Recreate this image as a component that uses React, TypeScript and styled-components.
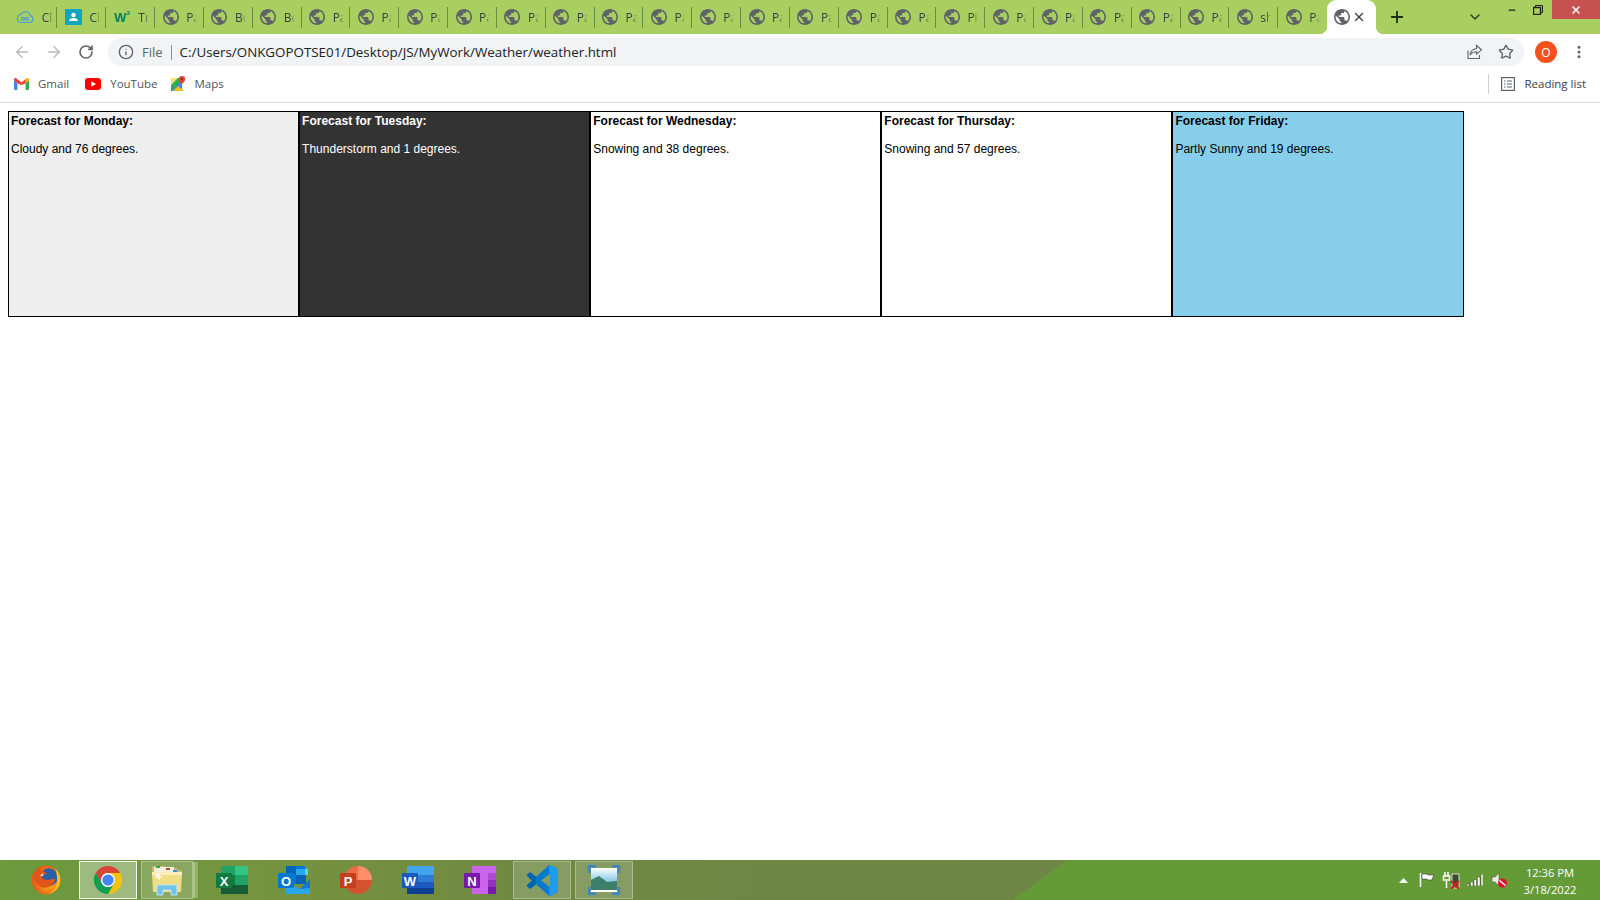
import React from "react";
import styled, { createGlobalStyle } from "styled-components";
import { ArrowLeft, ArrowRight, RotateCw, Info, Star, Plus, ChevronDown, X, Minus, EllipsisVertical } from "lucide-react";

const GlobalStyle = createGlobalStyle`
  html, body { margin: 0; padding: 0; height: 100%; overflow: hidden; background: #fff; }
  #root { height: 100%; }
`;

const uiFont = `"Open Sans", "Noto Sans", sans-serif`;

const Screen = styled.div`
  display: flex;
  flex-direction: column;
  width: 1600px;
  height: 900px;
  font-family: ${uiFont};
`;

const TabStrip = styled.div`
  display: flex;
  align-items: stretch;
  height: 34px;
  padding-left: 8.67px;
  background: #a8cf60;
  flex-shrink: 0;
`;

const Tab = styled.div`
  display: flex;
  align-items: center;
  box-sizing: border-box;
  width: 48.83px;
  padding-left: 7.5px;
  gap: 7.5px;
  border-right: 1px solid #6d8c3f;
  border-image: linear-gradient(to bottom, transparent 8px, #6d8c3f 8px, #6d8c3f 27px, transparent 27px) 1;
  color: #3c4043;
  font-size: 12px;
  &:nth-child(27) { border-right: none; }
  svg { flex-shrink: 0; }
`;

const TabTitle = styled.span`
  white-space: nowrap;
  -webkit-mask-image: linear-gradient(to right, #000 6px, transparent 11px);
  mask-image: linear-gradient(to right, #000 6px, transparent 11px);
`;

const ActiveTab = styled.div`
  display: flex;
  align-items: center;
  width: 49px;
  padding-left: 7px;
  gap: 2px;
  box-sizing: border-box;
  background: #fff;
  border-radius: 9px 9px 0 0;
  position: relative;
  &::before, &::after {
    content: "";
    position: absolute;
    bottom: 0;
    width: 8px;
    height: 8px;
  }
  &::before { left: -8px; background: radial-gradient(circle at 0 0, transparent 8px, #fff 8.5px); }
  &::after { right: -8px; background: radial-gradient(circle at 100% 0, transparent 8px, #fff 8.5px); }
`;

const NewTab = styled.div`
  display: flex;
  align-items: center;
  margin-left: 12px;
  color: #1f2a10;
`;

const StripSpacer = styled.div`
  flex: 1;
`;

const TabSearch = styled.div`
  display: flex;
  align-items: center;
  margin-right: 17px;
  color: #37421f;
`;

const WinButton = styled.div<{ $w: number; $danger?: boolean }>`
  display: flex;
  align-items: center;
  justify-content: center;
  width: ${(p) => p.$w}px;
  height: 19px;
  color: ${(p) => (p.$danger ? "#fff" : "#222")};
  background: ${(p) => (p.$danger ? "#c75050" : "transparent")};
`;

const Toolbar = styled.div`
  display: flex;
  align-items: center;
  box-sizing: border-box;
  height: 34px;
  background: #fff;
  padding: 2px 0 0 13px;
  flex-shrink: 0;
`;

const NavButton = styled.div<{ $off?: boolean; $w: number }>`
  display: flex;
  align-items: center;
  width: ${(p) => p.$w}px;
  color: ${(p) => (p.$off ? "#b9bbbd" : "#5f6368")};
`;

const Omnibox = styled.div`
  display: flex;
  align-items: center;
  width: 1416px;
  height: 28px;
  margin-left: 1px;
  padding-left: 10px;
  box-sizing: border-box;
  background: #f1f3f4;
  border-radius: 14px;
`;

const Scheme = styled.span`
  margin-left: 8px;
  padding-right: 8px;
  border-right: 1px solid #8d8f92;
  font-size: 13px;
  line-height: 15px;
  color: #5f6368;
`;

const Url = styled.span`
  margin-left: 8px;
  font-size: 13.36px;
  color: #202124;
  white-space: nowrap;
`;

const OmniActions = styled.div`
  display: flex;
  align-items: center;
  gap: 15px;
  margin-left: auto;
  margin-right: 10px;
  color: #5f6368;
`;

const Avatar = styled.div`
  display: flex;
  align-items: center;
  justify-content: center;
  width: 22px;
  height: 22px;
  margin-left: 11px;
  border-radius: 50%;
  background: #f4511e;
  color: #fff;
  font-size: 12px;
`;

const MenuDots = styled.div`
  display: flex;
  margin-left: 14px;
  color: #5f6368;
`;

const BookmarkBar = styled.div`
  display: flex;
  align-items: center;
  box-sizing: border-box;
  height: 35px;
  padding: 0 0 3px 14px;
  background: #fff;
  border-bottom: 1px solid #d4d5d6;
  flex-shrink: 0;
`;

const Bookmark = styled.div<{ $next: number }>`
  display: flex;
  align-items: center;
  gap: 9px;
  margin-right: ${(p) => p.$next}px;
  font-size: 11.5px;
  color: #50545a;
`;

const ReadingList = styled.div`
  display: flex;
  align-items: center;
  gap: 9px;
  height: 20px;
  margin-left: auto;
  margin-right: 14px;
  padding-left: 12px;
  border-left: 1px solid #cfd1d3;
  font-size: 11.5px;
  color: #3c4043;
`;

const Page = styled.main`
  flex: 1;
  padding: 8px;
  background: #fff;
`;

const Row = styled.div`
  display: flex;
`;

const Forecast = styled.div<{ $bg: string; $fg: string }>`
  box-sizing: border-box;
  width: 291.12px;
  height: 206px;
  padding: 2px;
  border: 1px solid #000;
  background: ${(p) => p.$bg};
  color: ${(p) => p.$fg};
  font: 12px/14px "Liberation Sans", Arial, sans-serif;
  &:last-child { width: 292px; }
`;

const ForecastTitle = styled.div`
  font-weight: 700;
  margin-bottom: 14px;
`;

const Taskbar = styled.footer`
  display: flex;
  align-items: center;
  gap: 4px;
  height: 40px;
  padding-left: 17px;
  flex-shrink: 0;
  color: #fff;
  background:
    linear-gradient(144deg, transparent 627px, #659b37 628px),
    linear-gradient(90deg, #6c9a3d 0px, #719640 180px, #76923f 300px, #6f8843 520px, #6e8645 1100px);
`;

const TaskButton = styled.div<{ $state?: "active" | "open"; $stacked?: boolean }>`
  display: flex;
  align-items: center;
  justify-content: center;
  box-sizing: border-box;
  width: ${(p) => (p.$stacked ? 52 : 58)}px;
  height: 38px;
  margin-right: ${(p) => (p.$stacked ? 6 : 0)}px;
  flex-shrink: 0;
  border: 1px solid
    ${(p) =>
      p.$state === "active" ? "rgba(255,255,255,0.9)" : p.$state === "open" ? "rgba(255,255,255,0.3)" : "transparent"};
  background: ${(p) =>
    p.$state === "active" ? "rgba(255,255,255,0.33)" : p.$state === "open" ? "rgba(255,255,255,0.17)" : "transparent"};
  box-shadow: ${(p) =>
    p.$stacked
      ? "3px 0 0 -1px rgba(200,215,160,0.5), 6px 0 0 -1px rgba(200,215,160,0.4)"
      : "none"};
`;

const Tray = styled.div`
  display: flex;
  align-items: center;
  margin-left: auto;
  height: 100%;
`;

const TrayIcon = styled.div<{ $w: number }>`
  display: flex;
  align-items: center;
  justify-content: center;
  width: ${(p) => p.$w}px;
`;

const Clock = styled.div`
  width: 74px;
  margin-left: 2px;
  margin-right: 13px;
  padding-top: 2px;
  text-align: center;
  font-size: 11.2px;
  line-height: 17px;
  color: #fff;
`;

const Globe = () => (
  <svg width="16" height="16" viewBox="2 2 20 20" fill="#5f6368">
    <path d="M12 2C6.48 2 2 6.48 2 12s4.48 10 10 10 10-4.48 10-10S17.52 2 12 2zm-1 17.93c-3.95-.49-7-3.85-7-7.93 0-.62.08-1.21.21-1.79L9 15v1c0 1.1.9 2 2 2v1.93zm6.9-2.54c-.26-.81-1-1.39-1.9-1.39h-1v-3c0-.55-.45-1-1-1H8v-2h2c.55 0 1-.45 1-1V7h2c1.1 0 2-.9 2-2v-.41c2.93 1.19 5 4.06 5 7.41 0 2.08-.8 3.97-2.1 5.39z" />
  </svg>
);

const CloudIcon = () => (
  <svg width="18" height="16" viewBox="0 0 18 16" fill="none" stroke="#4a9fc9" strokeWidth="1.2">
    <path d="M4.500 13.500h9a3.400 3.400 0 0 0 .8-6.700A5 5 0 0 0 5 5.300a4.200 4.200 0 0 0-.5 8.200z" />
    <circle cx="7" cy="9.800" r="1.500" />
    <circle cx="11" cy="9.800" r="1.500" />
  </svg>
);

const ContactIcon = () => (
  <svg width="17" height="16" viewBox="0 0 17 16">
    <rect width="17" height="16" rx="1" fill="#12a5bd" />
    <circle cx="8.500" cy="6" r="2.200" fill="#fff" />
    <path d="M4 12c.5-2.400 2.400-3 4.500-3s4 .6 4.500 3z" fill="#fff" />
  </svg>
);

const W3Icon = () => (
  <svg width="17" height="16" viewBox="0 0 17 16">
    <text x="0" y="13" fontFamily="Liberation Sans" fontWeight="700" fontSize="13" fill="#04845b">W</text>
    <text x="12.500" y="6" fontFamily="Liberation Sans" fontWeight="700" fontSize="6" fill="#04845b">3</text>
  </svg>
);

const ShareIcon = () => (
  <svg width="16" height="16" viewBox="0 0 16 16" fill="none" stroke="#5f6368" strokeWidth="1.1">
    <path d="M1 6.500V14.500H12.500V11" />
    <path d="M9.500 1.500l5 4.300-5 4.200V7.700c-3 0-5 1-6.500 3.300.4-3.500 2.600-6 6.500-6.500z" />
  </svg>
);

const GmailIcon = () => (
  <svg width="15" height="12" viewBox="0 0 15 12">
    <path d="M0 2v8.700C0 11.400.6 12 1.300 12H3.400V5.200z" fill="#4285f4" />
    <path d="M15 2v8.700c0 .7-.6 1.300-1.300 1.300h-2.100V5.200z" fill="#34a853" />
    <path d="M3.400 5.200L0 2.500V1.500C0 .2 1.500-.4 2.400.4L7.500 4.200 7.500 7.200z" fill="#ea4335" />
    <path d="M11.600 5.200L15 2.500V1.500c0-1.300-1.500-1.900-2.400-1.100L7.500 4.200v3z" fill="#ea4335" />
    <path d="M15 2.500L11.600 5.200V1.200l1-.8c.9-.8 2.400-.2 2.400 1.100z" fill="#fbbc04" />
  </svg>
);

const YoutubeIcon = () => (
  <svg width="16" height="12" viewBox="0 0 16 12">
    <rect width="16" height="12" rx="3" fill="#f00" />
    <path d="M6.300 3.300v5.400L11 6z" fill="#fff" />
  </svg>
);

const MapsIcon = () => (
  <svg width="15" height="15" viewBox="0 0 15 15">
    <path d="M0 2h11v13H0z" fill="#34a853" />
    <path d="M0 15L11 5v10z" fill="#4285f4" />
    <path d="M2 15l5-5 6 5z" fill="#fbbc04" />
    <path d="M0 2h7L0 9z" fill="#fbe36c" />
    <path d="M11 0a3.200 3.200 0 0 1 3.200 3.200C14.200 5.500 11 8 11 8S7.800 5.500 7.800 3.200A3.200 3.200 0 0 1 11 0z" fill="#ea4335" />
    <circle cx="11" cy="3.200" r="1.100" fill="#a52714" />
  </svg>
);

const ListIcon = () => (
  <svg width="14" height="14" viewBox="0 0 14 14" fill="none" stroke="#5f6368" strokeWidth="1.200">
    <rect x="0.600" y="0.600" width="12.800" height="12.800" />
    <path d="M3 4h1.500M6 4h5M3 7h1.500M6 7h5M3 10h1.500M6 10h5" />
  </svg>
);

const RestoreIcon = () => (
  <svg width="10" height="10" viewBox="0 0 10 10" fill="none" stroke="#222" strokeWidth="1">
    <rect x="0.500" y="2.500" width="7" height="7" strokeWidth="1.400" />
    <path d="M2.500 2.500V.5h7v7h-2" />
  </svg>
);

const FirefoxIcon = () => (
  <svg width="30" height="30" viewBox="0 0 32 32">
    <defs>
      <radialGradient id="foxBody" cx="0.6" cy="0.55" r="0.65">
        <stop offset="0.3" stopColor="#f9a01b" />
        <stop offset="1" stopColor="#dd4a17" />
      </radialGradient>
    </defs>
    <circle cx="16" cy="16" r="15.500" fill="url(#foxBody)" />
    <circle cx="19" cy="13" r="9.500" fill="#2a5ea8" />
    <path d="M8 4c3 2 6 2 9 5-2 1-5 1-5 3.500s3 3.500 6 3.500 6-2 8-1c-1 6-7 10-13 9-6-1-10-6-10-11 0-4 2-7 5-9.500z" fill="#e0551a" />
    <path d="M13 9c-1.500.5-3 1-3 3l3-.5z" fill="#ffe9c4" />
    <path d="M26 4c4 4 6 9 5 14-1 6-6 11-12 13 5-3 9-8 9-14 0-5-1-9-2-13z" fill="#ffc21e" />
  </svg>
);

const ChromeIcon = () => (
  <svg width="30" height="30" viewBox="0 0 32 32">
    <path d="M3 8.500A15 15 0 0 1 29 8.500H16A7.500 7.500 0 0 0 9.500 19.750z" fill="#db4437" />
    <path d="M29 8.500A15 15 0 0 1 16 31l6.500-11.250A7.500 7.500 0 0 0 16 8.500z" fill="#f4c20d" />
    <path d="M3 8.500A15 15 0 0 0 16 31l6.500-11.250A7.500 7.500 0 0 1 9.500 19.750z" fill="#0f9d58" />
    <circle cx="16" cy="16" r="7.500" fill="#fff" />
    <circle cx="16" cy="16" r="6" fill="#4285f4" />
  </svg>
);

const FolderIcon = () => (
  <svg width="32" height="32" viewBox="0 0 32 32">
    <path d="M1 2h13l2 2h10l1 2h4v8H1z" fill="#c9b56c" />
    <path d="M3 3h20v6H3z" fill="#f4f0dc" />
    <rect x="5" y="2" width="4" height="2" fill="#2fa84a" />
    <rect x="15" y="4" width="4" height="2" fill="#c8402c" />
    <rect x="22" y="6" width="4" height="2" fill="#2f8fd8" />
    <path d="M1 8h30l-1 20H2z" fill="#f2dc84" />
    <path d="M1 8h30v3H1z" fill="#fbeeb8" />
    <path d="M5 10l3-1 1 3 3 1-3 1-1 3-1-3-3-1z" fill="#fff" opacity="0.8" />
    <path d="M6 31V21h20v10h-6v-5h-8v5z" fill="#6fc3ea" stroke="#bfe6f7" strokeWidth="1" />
  </svg>
);

const LetterTile = ({ letter, fill }: { letter: string; fill: string }) => (
  <>
    <rect x="0" y="7" width="16" height="15" rx="1" fill={fill} />
    <text x="8" y="19.500" textAnchor="middle" fontFamily="Liberation Sans" fontWeight="700" fontSize="13" fill="#fff">{letter}</text>
  </>
);

const ExcelIcon = () => (
  <svg width="32" height="28" viewBox="0 0 32 28">
    <rect x="5" y="0" width="14" height="9" fill="#21a366" />
    <rect x="19" y="0" width="13" height="9" fill="#33c481" />
    <rect x="5" y="9" width="14" height="10" fill="#107c41" />
    <rect x="19" y="9" width="13" height="10" fill="#21a366" />
    <rect x="5" y="19" width="27" height="9" fill="#185c37" />
    <LetterTile letter="X" fill="#107c41" />
  </svg>
);

const OutlookIcon = () => (
  <svg width="32" height="28" viewBox="0 0 32 28">
    <rect x="8" y="0" width="10" height="9" fill="#0364b8" />
    <rect x="18" y="0" width="9" height="9" fill="#0078d4" />
    <rect x="8" y="9" width="10" height="9" fill="#0078d4" />
    <rect x="18" y="3" width="9" height="6" fill="#28a8ea" />
    <rect x="27" y="3" width="3" height="6" fill="#50d9ff" />
    <rect x="18" y="9" width="10" height="9" fill="#0364b8" />
    <path d="M8 16l14 7 10-7v12H8z" fill="#28a8ea" />
    <path d="M22 23l10-10v9z" fill="#0f78d4" />
    <LetterTile letter="O" fill="#0078d4" />
  </svg>
);

const PowerPointIcon = () => (
  <svg width="32" height="28" viewBox="0 0 32 28">
    <path d="M18 0a14 14 0 0 1 14 14H18z" fill="#ff8f6b" />
    <path d="M18 0A14 14 0 0 0 4 14h14z" fill="#ed6c47" />
    <path d="M4 14a14 14 0 0 0 28 0z" fill="#d35230" />
    <LetterTile letter="P" fill="#c43e1c" />
  </svg>
);

const WordIcon = () => (
  <svg width="32" height="28" viewBox="0 0 32 28">
    <rect x="5" y="0" width="27" height="9" fill="#41a5ee" />
    <rect x="5" y="9" width="27" height="7" fill="#2b7cd3" />
    <rect x="5" y="16" width="27" height="6" fill="#185abd" />
    <rect x="5" y="22" width="27" height="6" fill="#103f91" />
    <LetterTile letter="W" fill="#185abd" />
  </svg>
);

const OneNoteIcon = () => (
  <svg width="32" height="28" viewBox="0 0 32 28">
    <rect x="8" y="0" width="24" height="28" fill="#ca64ea" />
    <rect x="24" y="7" width="8" height="7" fill="#ae4bd5" />
    <rect x="24" y="14" width="8" height="7" fill="#9332bf" />
    <rect x="24" y="21" width="8" height="7" fill="#7719aa" />
    <LetterTile letter="N" fill="#7719aa" />
  </svg>
);

const codePath =
  "M23.15 2.587L18.21.21a1.494 1.494 0 0 0-1.705.29l-9.46 8.63-4.12-3.128a.999.999 0 0 0-1.276.057L.327 7.261A1 1 0 0 0 .326 8.74L3.899 12 .326 15.26a1 1 0 0 0 .001 1.479L1.65 17.94a.999.999 0 0 0 1.276.057l4.12-3.128 9.46 8.63a1.492 1.492 0 0 0 1.704.29l4.942-2.377A1.5 1.5 0 0 0 24 20.06V3.939a1.5 1.5 0 0 0-.85-1.352zm-5.146 14.861L10.826 12l7.178-5.448v10.896z";

const VsCodeIcon = () => (
  <svg width="31" height="31" viewBox="0 0 24 24">
    <defs>
      <clipPath id="codeRight"><rect x="17.200" y="0" width="7" height="24" /></clipPath>
      <clipPath id="codeLeft"><rect x="0" y="0" width="7" height="24" /></clipPath>
    </defs>
    <path d={codePath} fill="#007acc" />
    <path d={codePath} fill="#0065a9" clipPath="url(#codeLeft)" />
    <path d={codePath} fill="#1f9cf0" clipPath="url(#codeRight)" />
  </svg>
);

const PhotoIcon = () => (
  <svg width="32" height="30" viewBox="0 0 32 30">
    <defs>
      <linearGradient id="sky" x1="0" y1="0" x2="0" y2="1">
        <stop offset="0" stopColor="#f4fbff" />
        <stop offset="0.55" stopColor="#8fcbe6" />
        <stop offset="1" stopColor="#3f8fb3" />
      </linearGradient>
    </defs>
    <rect x="3" y="3" width="26" height="24" fill="#fff" />
    <rect x="3" y="4" width="26" height="21" fill="url(#sky)" />
    <path d="M3 15l8-4 8 6 10-1v9H3z" fill="#3d7f6c" />
    <path d="M1 8V1h7M24 1h7v7M31 22v7h-7M8 29H1v-7" fill="none" stroke="#3d86c6" strokeWidth="3" />
  </svg>
);

const TrayTriangle = () => (
  <svg width="9" height="5" viewBox="0 0 9 5"><path d="M4.500 0L9 5H0z" fill="#fff" /></svg>
);

const TrayFlag = () => (
  <svg width="16" height="16" viewBox="0 0 16 16">
    <path d="M1.500 1v14" stroke="#fff" strokeWidth="1.500" />
    <path d="M3 2h5l1 1h6l-2 4 0 1H9L8 7H3z" fill="#fff" stroke="#1d2b10" strokeWidth="0.500" />
  </svg>
);

const TrayPower = () => (
  <svg width="18" height="17" viewBox="0 0 18 17">
    <path d="M3 0v4M6 0v4M1.500 4h6v4h-6zM4.500 8v8" stroke="#fff" strokeWidth="1.500" fill="none" />
    <rect x="10" y="2" width="7" height="14" fill="#3d4a2a" stroke="#d8dcc8" strokeWidth="1" />
    <path d="M9 9l8 8M17 9l-8 8" stroke="#d81e1e" strokeWidth="2" />
  </svg>
);

const TraySignal = () => (
  <svg width="16" height="12" viewBox="0 0 16 12">
    <path d="M0 10h2v2H0zM3.500 8h2.500v4H3.500zM7 5.500h2.500V12H7zM10.500 3H13v9h-2.500zM14 0h2v12h-2z" fill="#fff" stroke="#1d2b10" strokeWidth="0.400" />
  </svg>
);

const TraySpeaker = () => (
  <svg width="16" height="16" viewBox="0 0 16 16">
    <path d="M1 5h3l4-4v13l-4-4H1z" fill="#e8ece0" stroke="#3a4a28" strokeWidth="0.500" />
    <circle cx="11.500" cy="11" r="4.500" fill="#e2102b" />
    <path d="M8.500 8.500l6 5" stroke="#fff" strokeWidth="1.500" />
  </svg>
);

const tabTitles = ["Pa", "Bc", "Bc", "Pa", "Pa", "Pa", "Pa", "Pa", "Pa", "Pa", "Pa", "Pa", "Pa", "Pa", "Pa", "Pa", "Pi", "Pa", "Pa", "Pa", "Pa", "Pa", "sh", "Pa"];

const forecasts = [
  { day: "Monday", text: "Cloudy and 76 degrees.", bg: "#eeeeee", fg: "#000" },
  { day: "Tuesday", text: "Thunderstorm and 1 degrees.", bg: "#333333", fg: "#fff" },
  { day: "Wednesday", text: "Snowing and 38 degrees.", bg: "#ffffff", fg: "#000" },
  { day: "Thursday", text: "Snowing and 57 degrees.", bg: "#ffffff", fg: "#000" },
  { day: "Friday", text: "Partly Sunny and 19 degrees.", bg: "#87ceeb", fg: "#000" },
];

export default function App() {
  return (
    <Screen>
      <GlobalStyle />
      <TabStrip>
        <Tab><CloudIcon /><TabTitle>Cl</TabTitle></Tab>
        <Tab><ContactIcon /><TabTitle>Cl</TabTitle></Tab>
        <Tab><W3Icon /><TabTitle>Tr</TabTitle></Tab>
        {tabTitles.map((title, i) => (
          <Tab key={i}><Globe /><TabTitle>{title}</TabTitle></Tab>
        ))}
        <ActiveTab>
          <Globe />
          <X size={14} color="#3c4043" strokeWidth={2.4} />
        </ActiveTab>
        <NewTab><Plus size={18} strokeWidth={2.4} /></NewTab>
        <StripSpacer />
        <TabSearch><ChevronDown size={16} strokeWidth={2.4} /></TabSearch>
        <WinButton $w={24}><Minus size={10} strokeWidth={3} /></WinButton>
        <WinButton $w={28}><RestoreIcon /></WinButton>
        <WinButton $w={48} $danger><X size={12} strokeWidth={3} /></WinButton>
      </TabStrip>

      <Toolbar>
        <NavButton $off $w={32}><ArrowLeft size={18} /></NavButton>
        <NavButton $off $w={33}><ArrowRight size={18} /></NavButton>
        <NavButton $w={29}><RotateCw size={16} strokeWidth={2.4} /></NavButton>
        <Omnibox>
          <Info size={16} color="#5f6368" />
          <Scheme>File</Scheme>
          <Url>C:/Users/ONKGOPOTSE01/Desktop/JS/MyWork/Weather/weather.html</Url>
          <OmniActions>
            <ShareIcon />
            <Star size={16} strokeWidth={2} />
          </OmniActions>
        </Omnibox>
        <Avatar>O</Avatar>
        <MenuDots><EllipsisVertical size={16} strokeWidth={2.6} /></MenuDots>
      </Toolbar>

      <BookmarkBar>
        <Bookmark $next={16}><GmailIcon />Gmail</Bookmark>
        <Bookmark $next={13}><YoutubeIcon />YouTube</Bookmark>
        <Bookmark $next={0}><MapsIcon />Maps</Bookmark>
        <ReadingList><ListIcon />Reading list</ReadingList>
      </BookmarkBar>

      <Page>
        <Row>
          {forecasts.map((f) => (
            <Forecast key={f.day} $bg={f.bg} $fg={f.fg}>
              <ForecastTitle>Forecast for {f.day}:</ForecastTitle>
              {f.text}
            </Forecast>
          ))}
        </Row>
      </Page>

      <Taskbar>
        <TaskButton><FirefoxIcon /></TaskButton>
        <TaskButton $state="active"><ChromeIcon /></TaskButton>
        <TaskButton $state="open" $stacked><FolderIcon /></TaskButton>
        <TaskButton><ExcelIcon /></TaskButton>
        <TaskButton><OutlookIcon /></TaskButton>
        <TaskButton><PowerPointIcon /></TaskButton>
        <TaskButton><WordIcon /></TaskButton>
        <TaskButton><OneNoteIcon /></TaskButton>
        <TaskButton $state="open"><VsCodeIcon /></TaskButton>
        <TaskButton $state="open"><PhotoIcon /></TaskButton>
        <Tray>
          <TrayIcon $w={24}><TrayTriangle /></TrayIcon>
          <TrayIcon $w={24}><TrayFlag /></TrayIcon>
          <TrayIcon $w={24}><TrayPower /></TrayIcon>
          <TrayIcon $w={24}><TraySignal /></TrayIcon>
          <TrayIcon $w={24}><TraySpeaker /></TrayIcon>
          <Clock>12:36 PM<br />3/18/2022</Clock>
        </Tray>
      </Taskbar>
    </Screen>
  );
}
